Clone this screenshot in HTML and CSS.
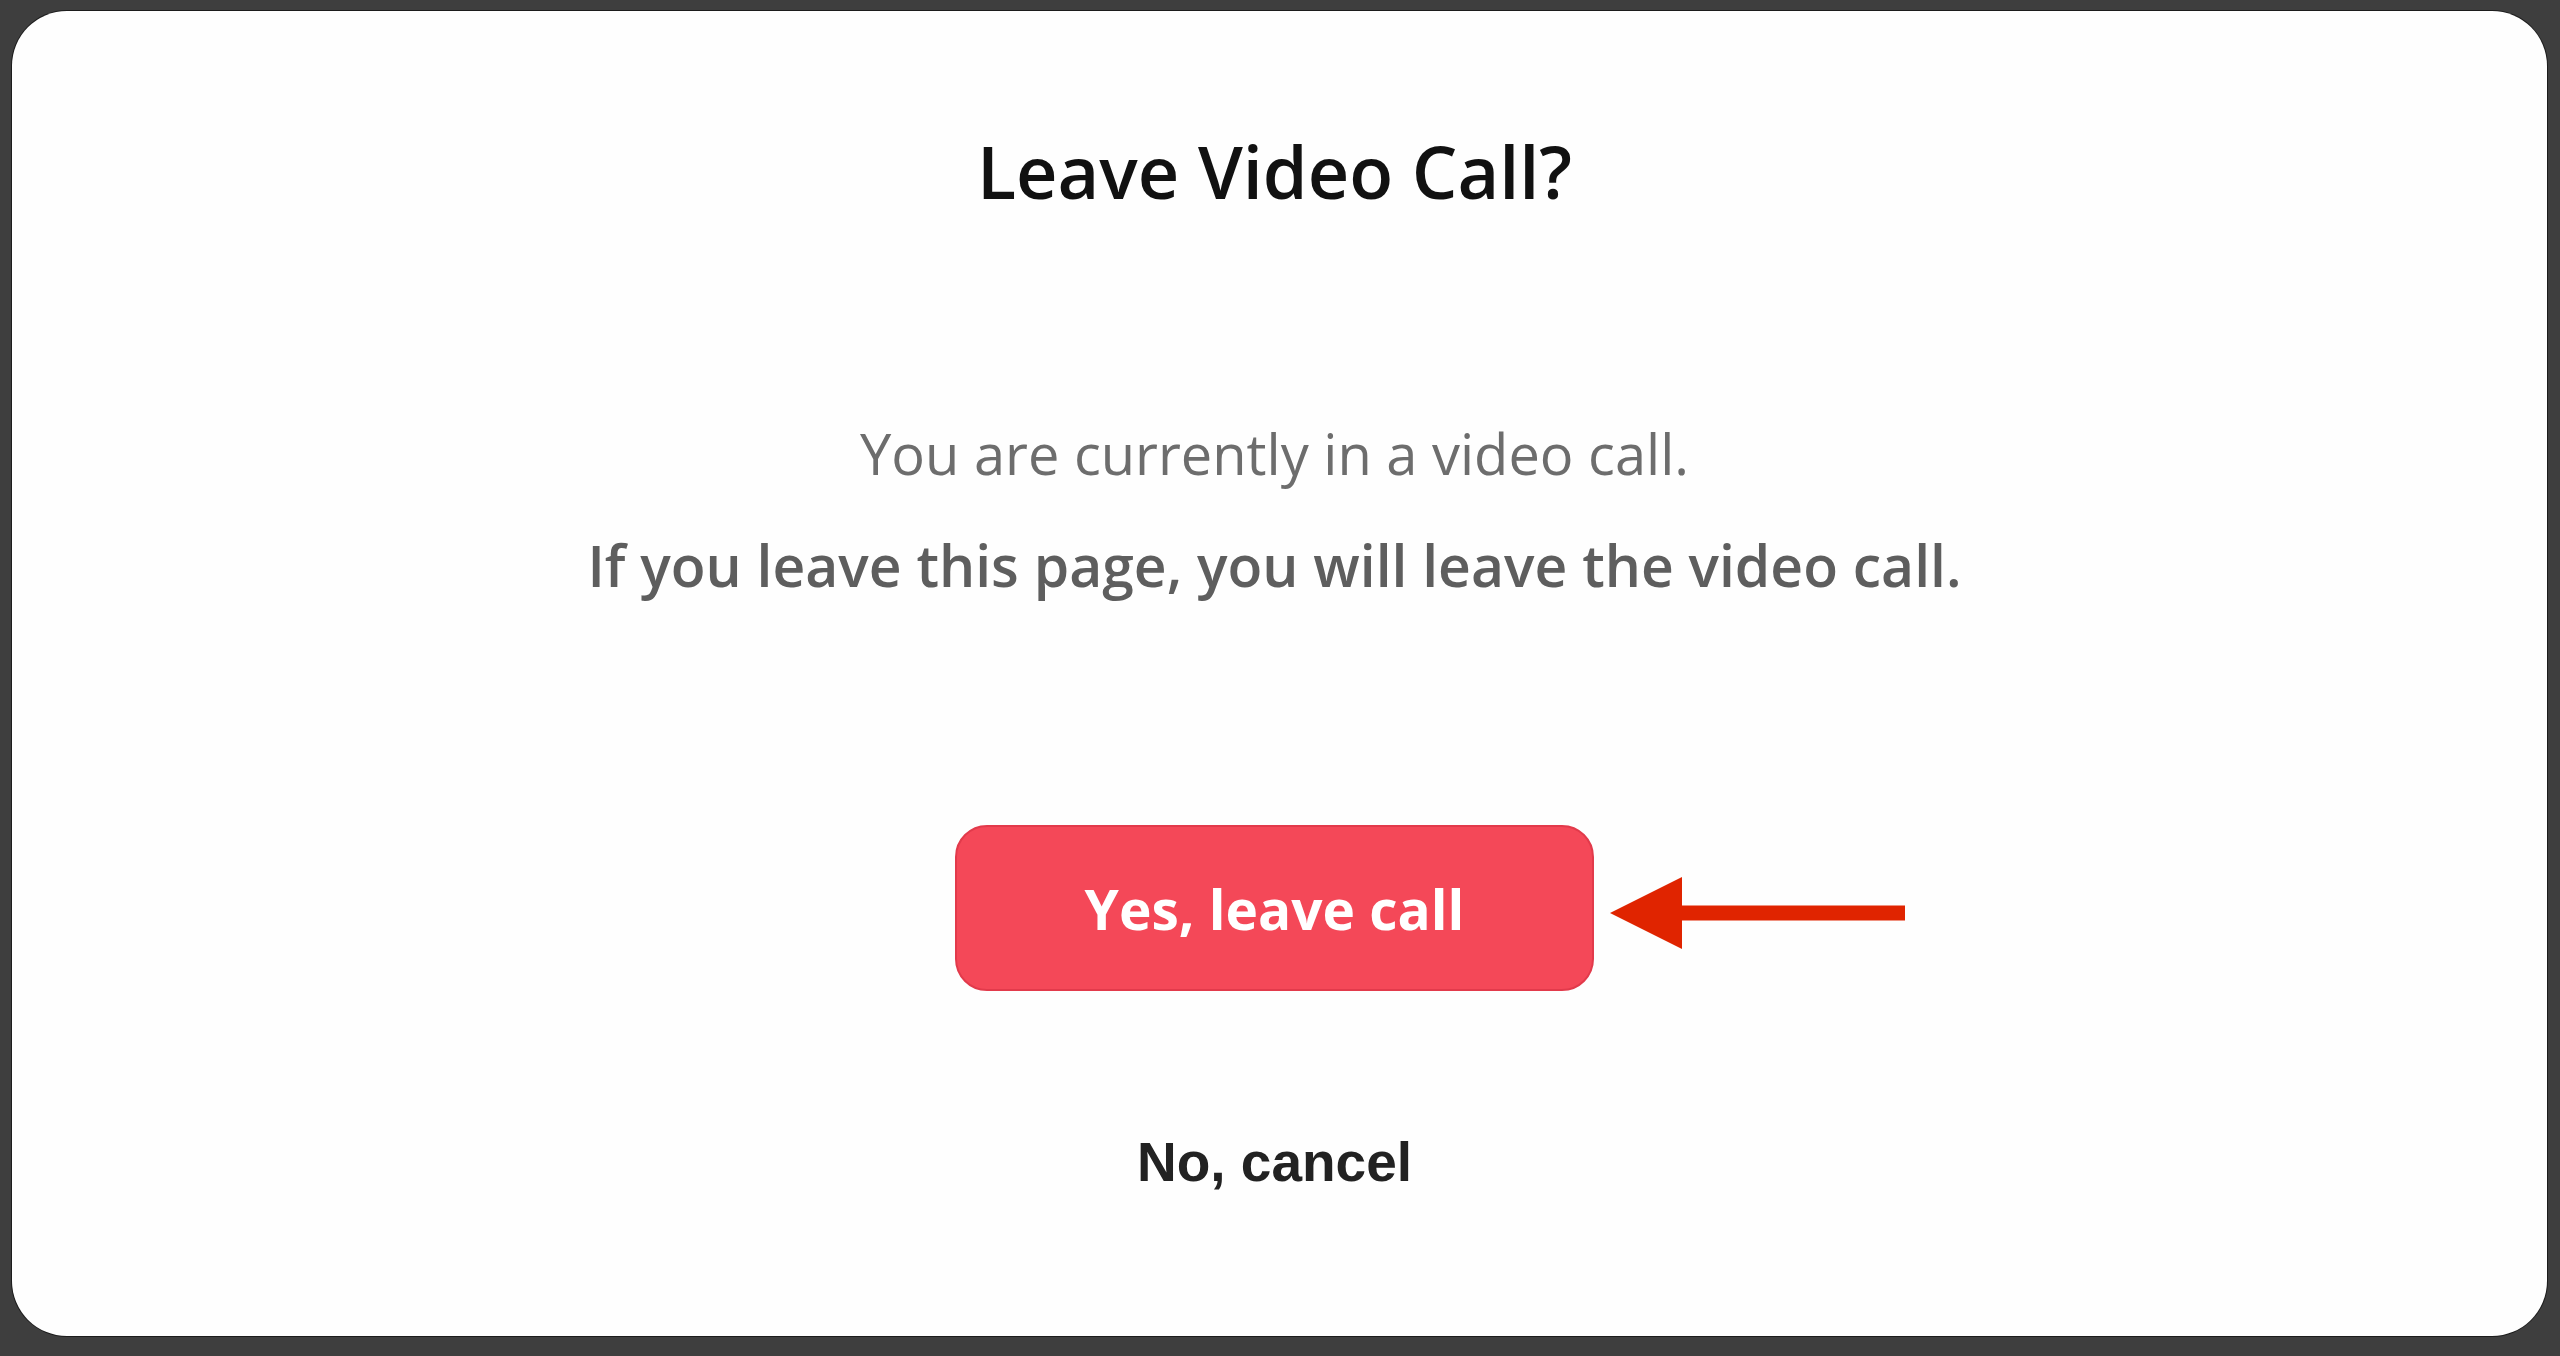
FILE: index.html
```html
<!DOCTYPE html>
<html lang="en">
<head>
  <meta charset="UTF-8">
  <title>Leave Video Call?</title>
  <link rel="stylesheet" href="styles.css">
</head>
<body>
  <div class="dialog">
    <h1 class="dialog-title">Leave Video Call?</h1>
    <p class="dialog-text">You are currently in a video call.</p>
    <p class="dialog-text strong">If you leave this page, you will leave the video call.</p>

    <div class="confirm-wrap">
      <button class="btn-leave">Yes, leave call</button>
      <svg class="pointer-arrow" width="295" height="72" viewBox="0 0 295 72">
        <polygon points="0,36 72,0 72,72" fill="#e02400"/>
        <rect x="70" y="28.5" width="225" height="15" fill="#e02400"/>
      </svg>
    </div>

    <button class="btn-cancel">No, cancel</button>
  </div>
</body>
</html>
```

FILE: styles.css
```css
html, body {
  height: 100%;
}

body {
  margin: 0;
  padding: 11px 13px 20px 12px;
  box-sizing: border-box;
  background: #3e3e3e;
  font-family: "Open Sans", "Noto Sans", sans-serif;
}

.dialog {
  height: 100%;
  background: #fefefe;
  border-radius: 55px;
  box-shadow: 0 0 0 1px #1c1c1c;
  display: flex;
  flex-direction: column;
  align-items: center;
  padding: 124px 10px 0 0;
  box-sizing: border-box;
}

.dialog-title {
  margin: 0;
  font-size: 72px;
  line-height: 1;
  font-weight: 600;
  color: #111;
}

.dialog-text {
  margin: 218px 0 0;
  font-size: 56px;
  line-height: 1;
  color: #6d6d6d;
}

.dialog-text.strong {
  margin-top: 56px;
  font-size: 57px;
  font-weight: 600;
  color: #5e5e5e;
}

.confirm-wrap {
  position: relative;
  margin-top: 231px;
}

.btn-leave {
  display: block;
  width: 639px;
  height: 166px;
  border: 2px solid #e23a4b;
  border-radius: 32px;
  background: #f44858;
  color: #fff;
  font-family: "Open Sans", "Noto Sans", sans-serif;
  font-size: 55px;
  font-weight: 700;
  cursor: pointer;
}

.pointer-arrow {
  position: absolute;
  left: calc(100% + 16px);
  top: 52px;
}

.btn-cancel {
  margin-top: 144px;
  padding: 0;
  border: none;
  background: none;
  font-family: "Liberation Sans", Arial, sans-serif;
  font-size: 55px;
  line-height: 1;
  font-weight: 700;
  color: #222;
  cursor: pointer;
}
```
